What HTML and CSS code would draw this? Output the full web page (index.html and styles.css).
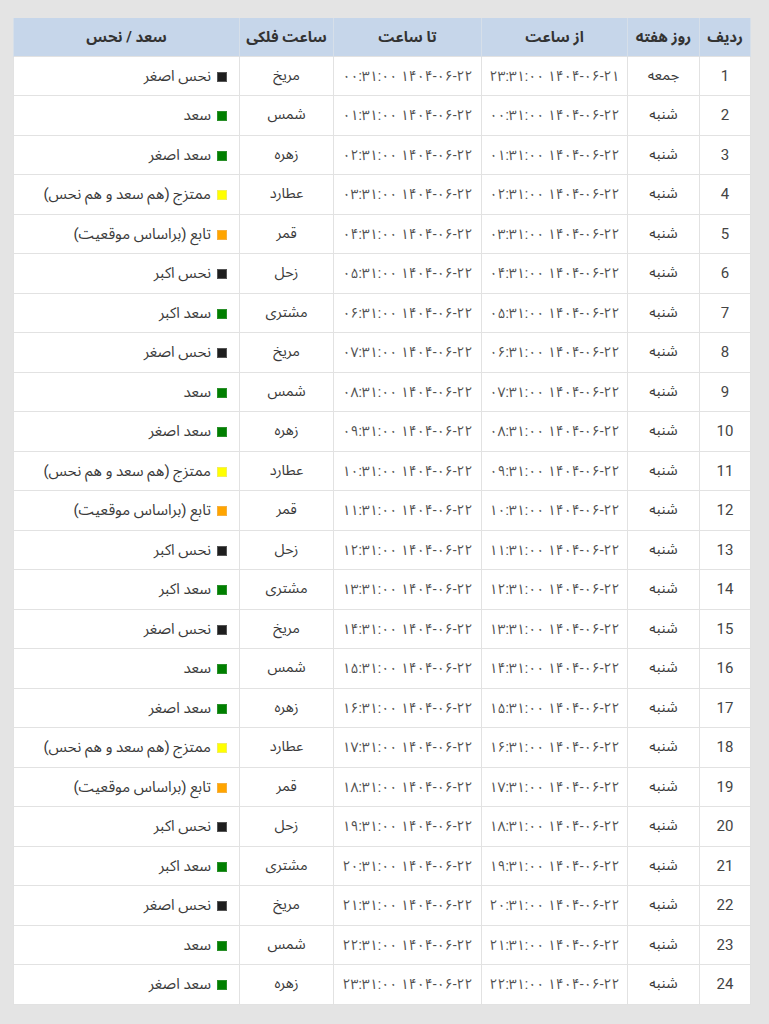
FILE: index.html
```html
<!DOCTYPE html>
<html lang="fa" dir="rtl">
<head>
<meta charset="utf-8">
<title>ساعات سعد و نحس</title>
<link rel="stylesheet" href="styles.css">
</head>
<body>
<div class="wrap">
<table class="hours">
<colgroup>
<col class="c-idx"><col class="c-day"><col class="c-from"><col class="c-to"><col class="c-planet"><col class="c-state">
</colgroup>
<thead>
<tr><th>ردیف</th><th>روز هفته</th><th>از ساعت</th><th>تا ساعت</th><th>ساعت فلکی</th><th>سعد / نحس</th></tr>
</thead>
<tbody>
<tr><td class="num">1</td><td>جمعه</td><td class="dt">۱۴۰۴-۰۶-۲۱ ۲۳:۳۱:۰۰</td><td class="dt">۱۴۰۴-۰۶-۲۲ ۰۰:۳۱:۰۰</td><td>مریخ</td><td class="state"><span class="sq black"></span>نحس اصغر</td></tr>
<tr><td class="num">2</td><td>شنبه</td><td class="dt">۱۴۰۴-۰۶-۲۲ ۰۰:۳۱:۰۰</td><td class="dt">۱۴۰۴-۰۶-۲۲ ۰۱:۳۱:۰۰</td><td>شمس</td><td class="state"><span class="sq green"></span>سعد</td></tr>
<tr><td class="num">3</td><td>شنبه</td><td class="dt">۱۴۰۴-۰۶-۲۲ ۰۱:۳۱:۰۰</td><td class="dt">۱۴۰۴-۰۶-۲۲ ۰۲:۳۱:۰۰</td><td>زهره</td><td class="state"><span class="sq green"></span>سعد اصغر</td></tr>
<tr><td class="num">4</td><td>شنبه</td><td class="dt">۱۴۰۴-۰۶-۲۲ ۰۲:۳۱:۰۰</td><td class="dt">۱۴۰۴-۰۶-۲۲ ۰۳:۳۱:۰۰</td><td>عطارد</td><td class="state"><span class="sq yellow"></span>ممتزج (هم سعد و هم نحس)</td></tr>
<tr><td class="num">5</td><td>شنبه</td><td class="dt">۱۴۰۴-۰۶-۲۲ ۰۳:۳۱:۰۰</td><td class="dt">۱۴۰۴-۰۶-۲۲ ۰۴:۳۱:۰۰</td><td>قمر</td><td class="state"><span class="sq orange"></span>تابع (براساس موقعیت)</td></tr>
<tr><td class="num">6</td><td>شنبه</td><td class="dt">۱۴۰۴-۰۶-۲۲ ۰۴:۳۱:۰۰</td><td class="dt">۱۴۰۴-۰۶-۲۲ ۰۵:۳۱:۰۰</td><td>زحل</td><td class="state"><span class="sq black"></span>نحس اکبر</td></tr>
<tr><td class="num">7</td><td>شنبه</td><td class="dt">۱۴۰۴-۰۶-۲۲ ۰۵:۳۱:۰۰</td><td class="dt">۱۴۰۴-۰۶-۲۲ ۰۶:۳۱:۰۰</td><td>مشتری</td><td class="state"><span class="sq green"></span>سعد اکبر</td></tr>
<tr><td class="num">8</td><td>شنبه</td><td class="dt">۱۴۰۴-۰۶-۲۲ ۰۶:۳۱:۰۰</td><td class="dt">۱۴۰۴-۰۶-۲۲ ۰۷:۳۱:۰۰</td><td>مریخ</td><td class="state"><span class="sq black"></span>نحس اصغر</td></tr>
<tr><td class="num">9</td><td>شنبه</td><td class="dt">۱۴۰۴-۰۶-۲۲ ۰۷:۳۱:۰۰</td><td class="dt">۱۴۰۴-۰۶-۲۲ ۰۸:۳۱:۰۰</td><td>شمس</td><td class="state"><span class="sq green"></span>سعد</td></tr>
<tr><td class="num">10</td><td>شنبه</td><td class="dt">۱۴۰۴-۰۶-۲۲ ۰۸:۳۱:۰۰</td><td class="dt">۱۴۰۴-۰۶-۲۲ ۰۹:۳۱:۰۰</td><td>زهره</td><td class="state"><span class="sq green"></span>سعد اصغر</td></tr>
<tr><td class="num">11</td><td>شنبه</td><td class="dt">۱۴۰۴-۰۶-۲۲ ۰۹:۳۱:۰۰</td><td class="dt">۱۴۰۴-۰۶-۲۲ ۱۰:۳۱:۰۰</td><td>عطارد</td><td class="state"><span class="sq yellow"></span>ممتزج (هم سعد و هم نحس)</td></tr>
<tr><td class="num">12</td><td>شنبه</td><td class="dt">۱۴۰۴-۰۶-۲۲ ۱۰:۳۱:۰۰</td><td class="dt">۱۴۰۴-۰۶-۲۲ ۱۱:۳۱:۰۰</td><td>قمر</td><td class="state"><span class="sq orange"></span>تابع (براساس موقعیت)</td></tr>
<tr><td class="num">13</td><td>شنبه</td><td class="dt">۱۴۰۴-۰۶-۲۲ ۱۱:۳۱:۰۰</td><td class="dt">۱۴۰۴-۰۶-۲۲ ۱۲:۳۱:۰۰</td><td>زحل</td><td class="state"><span class="sq black"></span>نحس اکبر</td></tr>
<tr><td class="num">14</td><td>شنبه</td><td class="dt">۱۴۰۴-۰۶-۲۲ ۱۲:۳۱:۰۰</td><td class="dt">۱۴۰۴-۰۶-۲۲ ۱۳:۳۱:۰۰</td><td>مشتری</td><td class="state"><span class="sq green"></span>سعد اکبر</td></tr>
<tr><td class="num">15</td><td>شنبه</td><td class="dt">۱۴۰۴-۰۶-۲۲ ۱۳:۳۱:۰۰</td><td class="dt">۱۴۰۴-۰۶-۲۲ ۱۴:۳۱:۰۰</td><td>مریخ</td><td class="state"><span class="sq black"></span>نحس اصغر</td></tr>
<tr><td class="num">16</td><td>شنبه</td><td class="dt">۱۴۰۴-۰۶-۲۲ ۱۴:۳۱:۰۰</td><td class="dt">۱۴۰۴-۰۶-۲۲ ۱۵:۳۱:۰۰</td><td>شمس</td><td class="state"><span class="sq green"></span>سعد</td></tr>
<tr><td class="num">17</td><td>شنبه</td><td class="dt">۱۴۰۴-۰۶-۲۲ ۱۵:۳۱:۰۰</td><td class="dt">۱۴۰۴-۰۶-۲۲ ۱۶:۳۱:۰۰</td><td>زهره</td><td class="state"><span class="sq green"></span>سعد اصغر</td></tr>
<tr><td class="num">18</td><td>شنبه</td><td class="dt">۱۴۰۴-۰۶-۲۲ ۱۶:۳۱:۰۰</td><td class="dt">۱۴۰۴-۰۶-۲۲ ۱۷:۳۱:۰۰</td><td>عطارد</td><td class="state"><span class="sq yellow"></span>ممتزج (هم سعد و هم نحس)</td></tr>
<tr><td class="num">19</td><td>شنبه</td><td class="dt">۱۴۰۴-۰۶-۲۲ ۱۷:۳۱:۰۰</td><td class="dt">۱۴۰۴-۰۶-۲۲ ۱۸:۳۱:۰۰</td><td>قمر</td><td class="state"><span class="sq orange"></span>تابع (براساس موقعیت)</td></tr>
<tr><td class="num">20</td><td>شنبه</td><td class="dt">۱۴۰۴-۰۶-۲۲ ۱۸:۳۱:۰۰</td><td class="dt">۱۴۰۴-۰۶-۲۲ ۱۹:۳۱:۰۰</td><td>زحل</td><td class="state"><span class="sq black"></span>نحس اکبر</td></tr>
<tr><td class="num">21</td><td>شنبه</td><td class="dt">۱۴۰۴-۰۶-۲۲ ۱۹:۳۱:۰۰</td><td class="dt">۱۴۰۴-۰۶-۲۲ ۲۰:۳۱:۰۰</td><td>مشتری</td><td class="state"><span class="sq green"></span>سعد اکبر</td></tr>
<tr><td class="num">22</td><td>شنبه</td><td class="dt">۱۴۰۴-۰۶-۲۲ ۲۰:۳۱:۰۰</td><td class="dt">۱۴۰۴-۰۶-۲۲ ۲۱:۳۱:۰۰</td><td>مریخ</td><td class="state"><span class="sq black"></span>نحس اصغر</td></tr>
<tr><td class="num">23</td><td>شنبه</td><td class="dt">۱۴۰۴-۰۶-۲۲ ۲۱:۳۱:۰۰</td><td class="dt">۱۴۰۴-۰۶-۲۲ ۲۲:۳۱:۰۰</td><td>شمس</td><td class="state"><span class="sq green"></span>سعد</td></tr>
<tr><td class="num">24</td><td>شنبه</td><td class="dt">۱۴۰۴-۰۶-۲۲ ۲۲:۳۱:۰۰</td><td class="dt">۱۴۰۴-۰۶-۲۲ ۲۳:۳۱:۰۰</td><td>زهره</td><td class="state"><span class="sq green"></span>سعد اصغر</td></tr>
</tbody>
</table>
</div>
</body>
</html>
```
FILE: styles.css
```css
html, body {
  margin: 0;
  padding: 0;
  background: #e4e4e4;
}
body {
  font-family: Roboto, "Noto Sans Arabic", "DejaVu Sans", sans-serif;
  color: #333;
}
.wrap {
  padding: 18px 18px 0 14px;
}
.hours {
  width: 737px;
  border-collapse: collapse;
  table-layout: fixed;
  background: #fff;
  direction: rtl;
}
.c-idx { width: 51px; }
.c-day { width: 72px; }
.c-from { width: 146px; }
.c-to { width: 148px; }
.c-planet { width: 94px; }
.c-state { width: 226px; }
.hours tr {
  height: 39.5px;
}
.hours thead tr {
  height: 38px;
}
.hours th {
  background: #c6d6ea;
  padding: 0 4px;
  font-size: 15px;
  line-height: 20px;
  font-weight: bold;
  color: #333;
  text-align: center;
  white-space: nowrap;
  border-left: 1px solid #d6dfe9;
  border-right: 1px solid #d6dfe9;
}
.hours td {
  padding: 0 4px;
  font-size: 14.5px;
  line-height: 20px;
  text-align: center;
  border: 1px solid #e2e2e2;
  white-space: nowrap;
  color: #3a3a3a;
}
.hours td.dt {
  font-size: 14px;
  color: #505050;
}
.hours td.num {
  font-size: 15px;
  color: #444;
}
.hours td.state {
  text-align: right;
  padding-right: 12px;
  font-size: 15px;
}
.sq {
  display: inline-block;
  width: 10px;
  height: 10px;
  margin-left: 6px;
  vertical-align: -1px;
  box-sizing: border-box;
}
.sq.black { background: #1e1e1e; border: 1px solid #555; }
.sq.green { background: #007f00; border: 1px solid #2a8f2a; }
.sq.yellow { background: #ffff00; border: 1px solid #f2ee5a; }
.sq.orange { background: #ffa500; border: 1px solid #f5b040; }
```
